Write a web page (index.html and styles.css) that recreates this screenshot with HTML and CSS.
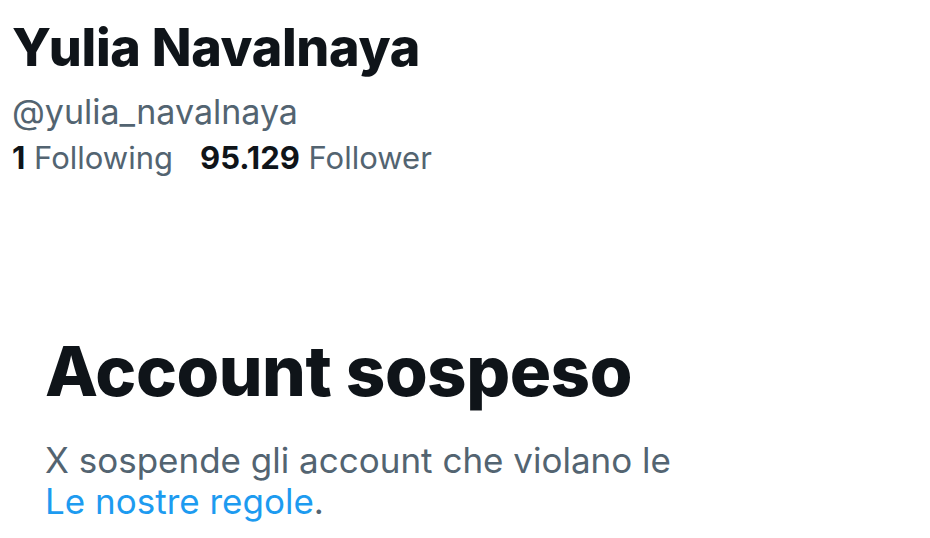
FILE: index.html
```html
<!DOCTYPE html>
<html lang="it">
<head>
  <meta charset="UTF-8" />
  <meta name="viewport" content="width=device-width, initial-scale=1.0"/>
  <title>Yulia Navalnaya</title>
  <link rel="stylesheet" href="styles.css">
</head>
<body>
  <div class="profile">
    <h1 class="name">Yulia Navalnaya</h1>
    <div class="handle">@yulia_navalnaya</div>
    <div class="stats">
      <span class="stat"><b>1</b> Following</span>
      <span class="stat"><b>95.129</b> Follower</span>
    </div>
  </div>

  <div class="suspended">
    <h2 class="title">Account sospeso</h2>
    <p class="desc">X sospende gli account che violano le<br><a href="#">Le nostre regole</a>.</p>
  </div>
</body>
</html>
```

FILE: styles.css
```css
:root {
  --text: #0f1419;
  --muted: #536471;
  --link: #1d9bf0;
}

html, body {
  margin: 0;
  padding: 0;
  background: #fff;
  font-family: Inter, "Noto Sans", sans-serif;
  color: var(--text);
}

.profile {
  padding: 18px 12px 0;
}

.name {
  margin: 0;
  font-size: 52px;
  font-weight: 800;
  line-height: 60px;
  letter-spacing: -0.3px;
}

.handle {
  margin-top: 13px;
  font-size: 34px;
  line-height: 42px;
  color: var(--muted);
}

.stats {
  display: flex;
  gap: 27px;
  margin-top: 4px;
  font-size: 31px;
  line-height: 42px;
  color: var(--muted);
}

.stat b {
  color: var(--text);
  font-weight: 700;
}

.suspended {
  padding: 152px 45px 0;
}

.title {
  margin: 0;
  font-size: 69px;
  font-weight: 800;
  line-height: 80px;
  letter-spacing: -0.5px;
}

.desc {
  margin: 29px 0 0;
  font-size: 35px;
  line-height: 41px;
  color: var(--muted);
}

.desc a {
  color: var(--link);
  text-decoration: none;
}
```
